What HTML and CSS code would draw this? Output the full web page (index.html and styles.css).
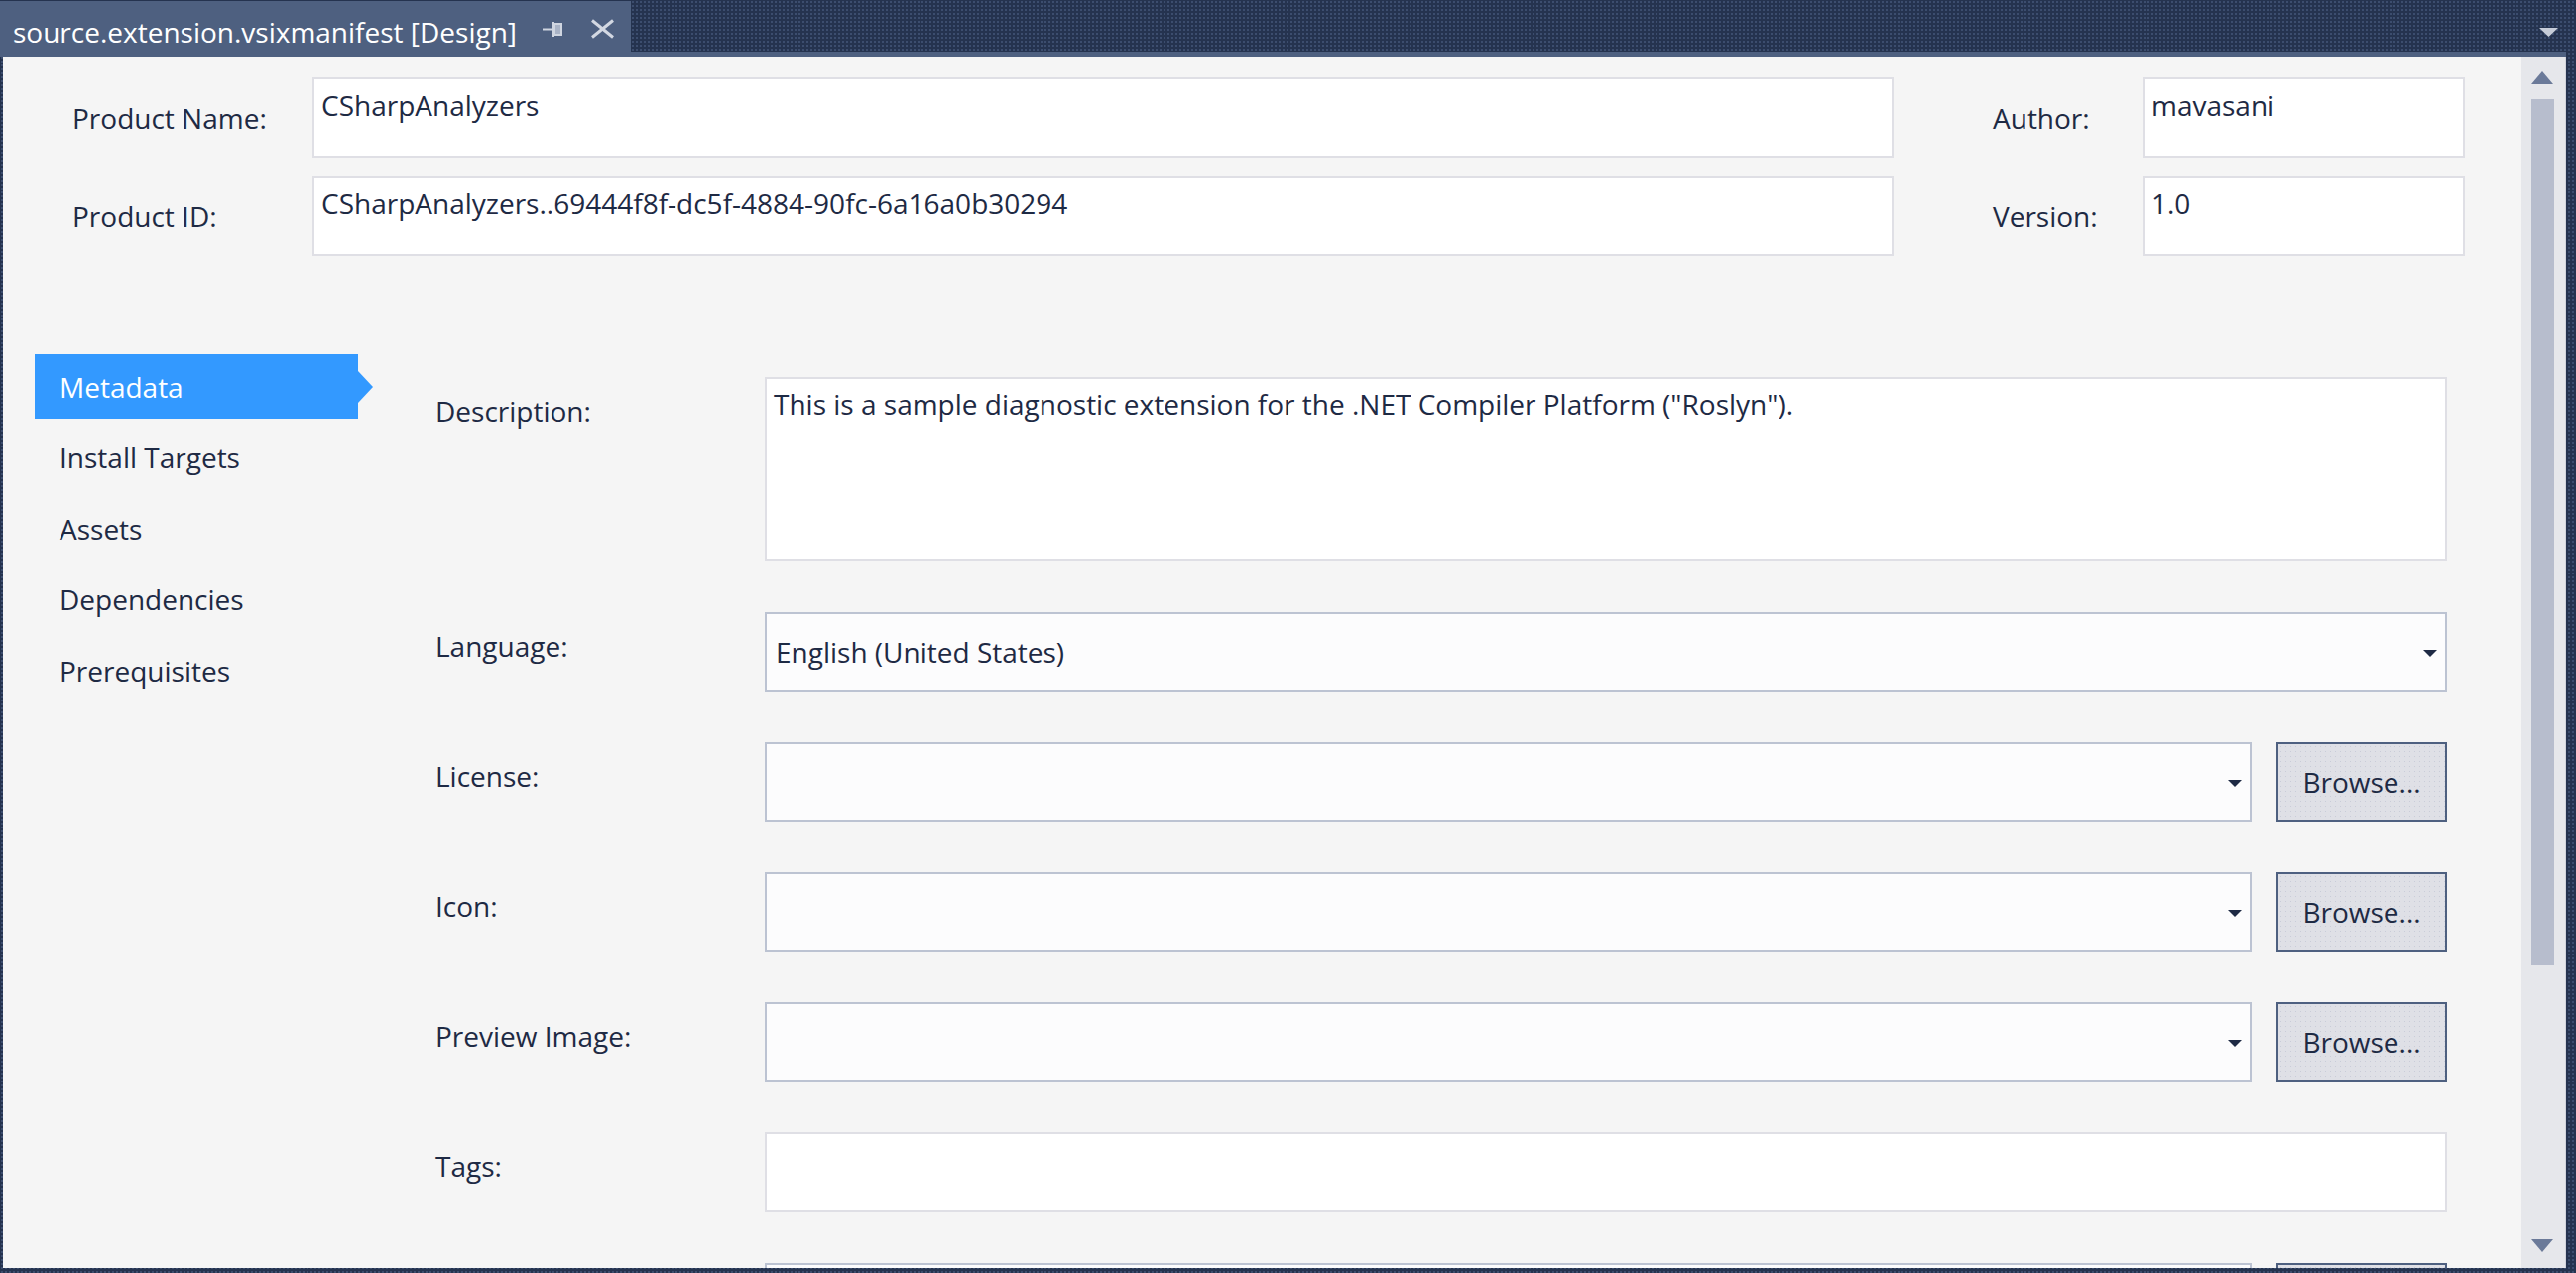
FILE: index.html
```html
<!DOCTYPE html>
<html>
<head>
<meta charset="utf-8">
<title>source.extension.vsixmanifest [Design]</title>
<link rel="stylesheet" href="styles.css">
</head>
<body>
<div class="app">
  <div class="tabbar">
    <div class="tab">
      <span class="tab-title">source.extension.vsixmanifest [Design]</span>
      <svg class="pin" width="20" height="15" viewBox="0 0 20 15">
        <line x1="0" y1="7.5" x2="11" y2="7.5" stroke="#cfd5e0" stroke-width="2"/>
        <line x1="11" y1="0" x2="11" y2="15" stroke="#cfd5e0" stroke-width="2"/>
        <rect x="12" y="2" width="7" height="11" fill="#a9b3c6" stroke="#cfd5e0" stroke-width="2"/>
      </svg>
      <svg class="close" width="25" height="20" viewBox="0 0 25 20">
        <line x1="2" y1="1.5" x2="23" y2="18.5" stroke="#d3d8e2" stroke-width="3"/>
        <line x1="23" y1="1.5" x2="2" y2="18.5" stroke="#d3d8e2" stroke-width="3"/>
      </svg>
    </div>
    <div class="tabrest">
      <div class="tabrest-top">
        <svg class="tabmenu" width="19" height="9" viewBox="0 0 19 9"><polygon points="0,0 19,0 9.5,9" fill="#c6ccd8"/></svg>
      </div>
      <div class="tabstrip"></div>
    </div>
  </div>

  <div class="window">
    <div class="content">
      <div class="header">
        <div class="label">Product Name:</div>
        <div class="textbox">CSharpAnalyzers</div>
        <div class="label label-right">Author:</div>
        <div class="textbox">mavasani</div>
        <div class="label">Product ID:</div>
        <div class="textbox">CSharpAnalyzers..69444f8f-dc5f-4884-90fc-6a16a0b30294</div>
        <div class="label label-right">Version:</div>
        <div class="textbox">1.0</div>
      </div>

      <div class="main">
        <nav class="nav">
          <div class="nav-item selected">Metadata</div>
          <div class="nav-item">Install Targets</div>
          <div class="nav-item">Assets</div>
          <div class="nav-item">Dependencies</div>
          <div class="nav-item">Prerequisites</div>
        </nav>

        <div class="form">
          <div class="row row-desc">
            <div class="row-label">Description:</div>
            <div class="textbox textarea">This is a sample diagnostic extension for the .NET Compiler Platform ("Roslyn").</div>
          </div>
          <div class="row">
            <div class="row-label">Language:</div>
            <div class="select"><span class="select-text">English (United States)</span><span class="caret"></span></div>
          </div>
          <div class="row">
            <div class="row-label">License:</div>
            <div class="select"><span class="select-text"></span><span class="caret"></span></div>
            <div class="button">Browse...</div>
          </div>
          <div class="row">
            <div class="row-label">Icon:</div>
            <div class="select"><span class="select-text"></span><span class="caret"></span></div>
            <div class="button">Browse...</div>
          </div>
          <div class="row">
            <div class="row-label">Preview Image:</div>
            <div class="select"><span class="select-text"></span><span class="caret"></span></div>
            <div class="button">Browse...</div>
          </div>
          <div class="row">
            <div class="row-label">Tags:</div>
            <div class="textbox field"></div>
          </div>
          <div class="row">
            <div class="row-label"></div>
            <div class="select"><span class="select-text"></span><span class="caret"></span></div>
            <div class="button"></div>
          </div>
        </div>
      </div>
    </div>

    <div class="scrollbar">
      <div class="sb-arrow sb-up"></div>
      <div class="sb-thumb"></div>
      <div class="sb-space"></div>
      <div class="sb-arrow sb-down"></div>
    </div>
  </div>
</div>
</body>
</html>
```

FILE: styles.css
```css
* { box-sizing: border-box; }

html, body {
  margin: 0;
  padding: 0;
}

body {
  font-family: "Open Sans", "Noto Sans", sans-serif;
  font-size: 28px;
  line-height: 38px;
  color: #1e2a44;
  background: #26344f;
}

.app {
  width: 2597px;
  height: 1283px;
  overflow: hidden;
  background-color: #25334f;
  background-image: radial-gradient(circle, #3c4d6e 0.9px, transparent 1.1px);
  background-size: 4px 4px;
}

/* ---------- tab bar ---------- */
.tabbar {
  display: flex;
  height: 57px;
  padding-right: 10px;
}

.tab {
  width: 636px;
  height: 56px;
  margin-top: 1px;
  background: #4e6080;
  display: flex;
  align-items: flex-start;
  padding-left: 13px;
}

.tab-title {
  color: #ffffff;
  margin-top: 12px;
  white-space: nowrap;
}

.pin {
  margin-left: 26px;
  margin-top: 21px;
  flex: none;
}

.close {
  margin-left: 28px;
  margin-top: 18px;
  flex: none;
}

.tabrest {
  flex: 1;
  display: flex;
  flex-direction: column;
}

.tabrest-top {
  flex: 1;
  display: flex;
  justify-content: flex-end;
  align-items: flex-start;
  padding-top: 28px;
  padding-right: 8px;
}

.tabstrip {
  height: 5px;
  background: #4e6080;
}

/* ---------- window ---------- */
.window {
  display: flex;
  width: 2584px;
  height: 1221px;
  margin-left: 3px;
}

.content {
  flex: 1;
  min-width: 0;
  overflow: hidden;
  background: #f5f5f5;
}

/* header grid */
.header {
  display: grid;
  grid-template-columns: 242px 1594px 251px 325px;
  grid-auto-rows: 81px;
  row-gap: 18px;
  margin: 21px 0 0 70px;
}

.label {
  display: flex;
  align-items: center;
  white-space: nowrap;
}

.label-right {
  padding-left: 100px;
}

.textbox {
  background: #ffffff;
  border: 2px solid #dfdfe5;
  padding: 7px 7px 0;
  white-space: nowrap;
  overflow: hidden;
}

/* main */
.main {
  display: flex;
  margin-top: 99px;
}

.nav {
  flex: none;
  width: 326px;
  margin-left: 32px;
  display: flex;
  flex-direction: column;
  gap: 6.5px;
}

.nav-item {
  height: 65px;
  padding-left: 25px;
  display: flex;
  align-items: center;
  white-space: nowrap;
}

.nav-item.selected {
  background: #3399ff;
  color: #ffffff;
  position: relative;
}

.nav-item.selected::after {
  content: "";
  position: absolute;
  left: 100%;
  top: 50%;
  margin-top: -16px;
  border-left: 15px solid #3399ff;
  border-top: 16px solid transparent;
  border-bottom: 16px solid transparent;
}

.form {
  flex: none;
  width: 2028px;
  margin-left: 78px;
  padding-top: 23px;
  display: flex;
  flex-direction: column;
  gap: 51px;
}

.row {
  display: flex;
  align-items: flex-start;
}

.row-desc {
  margin-bottom: 1px;
}

.row-label {
  flex: none;
  width: 332px;
  padding-top: 15px;
  min-height: 1px;
  white-space: nowrap;
}

.textarea {
  flex: 1;
  height: 185px;
  padding-top: 6px;
}

.field {
  flex: 1;
  height: 81px;
}

.select {
  flex: 1;
  height: 80px;
  border: 2px solid #bcc3d2;
  background: #fcfcfd;
  display: flex;
  align-items: center;
  justify-content: space-between;
  padding: 0 8px 0 9px;
}

.select-text {
  white-space: nowrap;
}

.caret {
  width: 0;
  height: 0;
  border-left: 7px solid transparent;
  border-right: 7px solid transparent;
  border-top: 7px solid #1e2a44;
  margin-top: 2px;
}

.button {
  flex: none;
  width: 172px;
  height: 80px;
  margin-left: 25px;
  border: 2px solid #4e6080;
  background-color: #dfe0e6;
  background-image: radial-gradient(circle, #c9ccd8 0.6px, transparent 0.9px);
  background-size: 5px 5px;
  display: flex;
  align-items: center;
  justify-content: center;
  white-space: nowrap;
}

/* scrollbar */
.scrollbar {
  flex: none;
  width: 45px;
  background: #e6e7eb;
  border-right: 1px solid #d2d4dc;
  display: flex;
  flex-direction: column;
  align-items: flex-start;
  padding: 15px 0 16px 10px;
}

.sb-arrow {
  width: 0;
  height: 0;
  border-left: 11.5px solid transparent;
  border-right: 11.5px solid transparent;
}

.sb-up {
  border-bottom: 13px solid #6b7a99;
}

.sb-down {
  border-top: 13px solid #6b7a99;
}

.sb-thumb {
  width: 23px;
  height: 873px;
  margin-top: 15px;
  background: #b7bdcd;
}

.sb-space {
  flex: 1;
}
```
